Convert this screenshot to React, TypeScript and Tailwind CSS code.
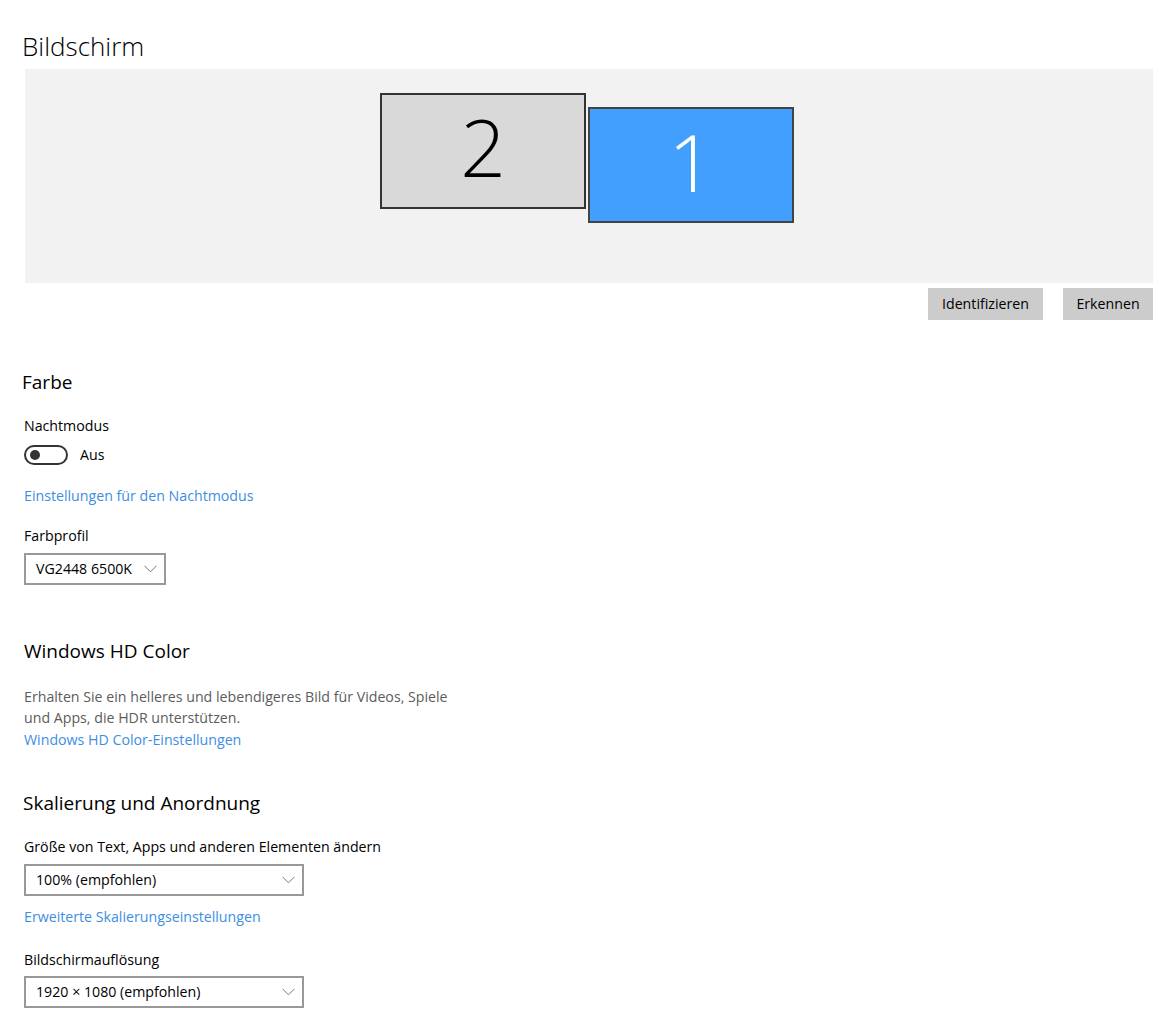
const font = { fontFamily: '"Open Sans", "Noto Sans", sans-serif' }

function Chevron() {
    return (
        <svg width="13" height="8" viewBox="0 0 13 8" fill="none" className="text-[#7a7a7a]">
            <path d="M0.5 0.8 L6.5 6.8 L12.5 0.8" stroke="currentColor" strokeWidth="1" />
        </svg>
    )
}

function Select(props: { value: string; width: string }) {
    return (
        <div
            className={`flex h-[32px] items-center justify-between border-2 border-[#999999] bg-white pl-[10px] pr-[7px] text-[14.2px] text-black ${props.width}`}
        >
            <span>{props.value}</span>
            <Chevron />
        </div>
    )
}

function Link(props: { children: React.ReactNode }) {
    return <a className="block h-[20px] cursor-pointer text-[14.2px] leading-[20px] text-[#3d8ee3]">{props.children}</a>
}

export default function App() {
    return (
        <div style={font} className="min-h-screen bg-white pl-[24px] pr-[6px] text-black">
            {/* Monitor arrangement */}
            <h1 className="ml-[-2px] pt-[28px] text-[26px] font-light leading-[36px]">Bildschirm</h1>
            <div className="relative ml-px mt-[5px] h-[214px] bg-[#f2f2f2]">
                <div className="absolute left-[355px] top-[24px] flex h-[116px] w-[206px] items-center justify-center border-2 border-[#333333] bg-[#d9d9d9] pb-[10px]">
                    <span className="text-[80px] font-light leading-none text-black">2</span>
                </div>
                <div className="absolute left-[563px] top-[38px] flex h-[116px] w-[206px] items-center justify-center border-2 border-[#444444] bg-[#429ffe] pb-[8px]">
                    <span className="text-[80px] font-light leading-none text-white">1</span>
                </div>
            </div>
            <div className="mt-[5px] flex justify-end gap-[20px]">
                <button className="h-[32px] w-[115px] bg-[#cccccc] text-[14.2px] text-black">Identifizieren</button>
                <button className="h-[32px] w-[90px] bg-[#cccccc] text-[14.2px] text-black">Erkennen</button>
            </div>

            {/* Farbe */}
            <h2 className="ml-[-2px] mt-[48px] text-[19px] leading-[28px]">Farbe</h2>
            <div className="mt-[20px] text-[14.2px] leading-[20px]">Nachtmodus</div>
            <div className="mt-[9px] flex h-[20px] items-center gap-[12px]">
                <div className="flex h-[20px] w-[44px] items-center rounded-full border-2 border-[#333333] pl-[4px]">
                    <div className="h-[10px] w-[10px] rounded-full bg-[#333333]" />
                </div>
                <span className="text-[14.2px] leading-[20px]">Aus</span>
            </div>
            <div className="mt-[21px]">
                <Link>Einstellungen für den Nachtmodus</Link>
            </div>
            <div className="mt-[20px] text-[14.2px] leading-[20px]">Farbprofil</div>
            <div className="mt-[7px]">
                <Select value="VG2448 6500K" width="w-[142px]" />
            </div>

            {/* HDR */}
            <h2 className="mt-[52px] text-[19px] leading-[28px]">Windows HD Color</h2>
            <p className="mt-[21px] w-[432px] text-[14.2px] leading-[21px] text-[#5c5c5c]">
                Erhalten Sie ein helleres und lebendigeres Bild für Videos, Spiele und Apps, die HDR unterstützen.
            </p>
            <div className="mt-[2px]">
                <Link>Windows HD Color-Einstellungen</Link>
            </div>

            {/* Skalierung */}
            <h2 className="ml-[-1px] mt-[39px] text-[19px] leading-[28px]">Skalierung und Anordnung</h2>
            <div className="mt-[20px] text-[14.2px] leading-[20px]">Größe von Text, Apps und anderen Elementen ändern</div>
            <div className="mt-[7px]">
                <Select value="100% (empfohlen)" width="w-[280px]" />
            </div>
            <div className="mt-[11px]">
                <Link>Erweiterte Skalierungseinstellungen</Link>
            </div>
            <div className="mt-[23px] text-[14.2px] leading-[20px]">Bildschirmauflösung</div>
            <div className="mt-[6px]">
                <Select value="1920 × 1080 (empfohlen)" width="w-[280px]" />
            </div>
        </div>
    )
}
